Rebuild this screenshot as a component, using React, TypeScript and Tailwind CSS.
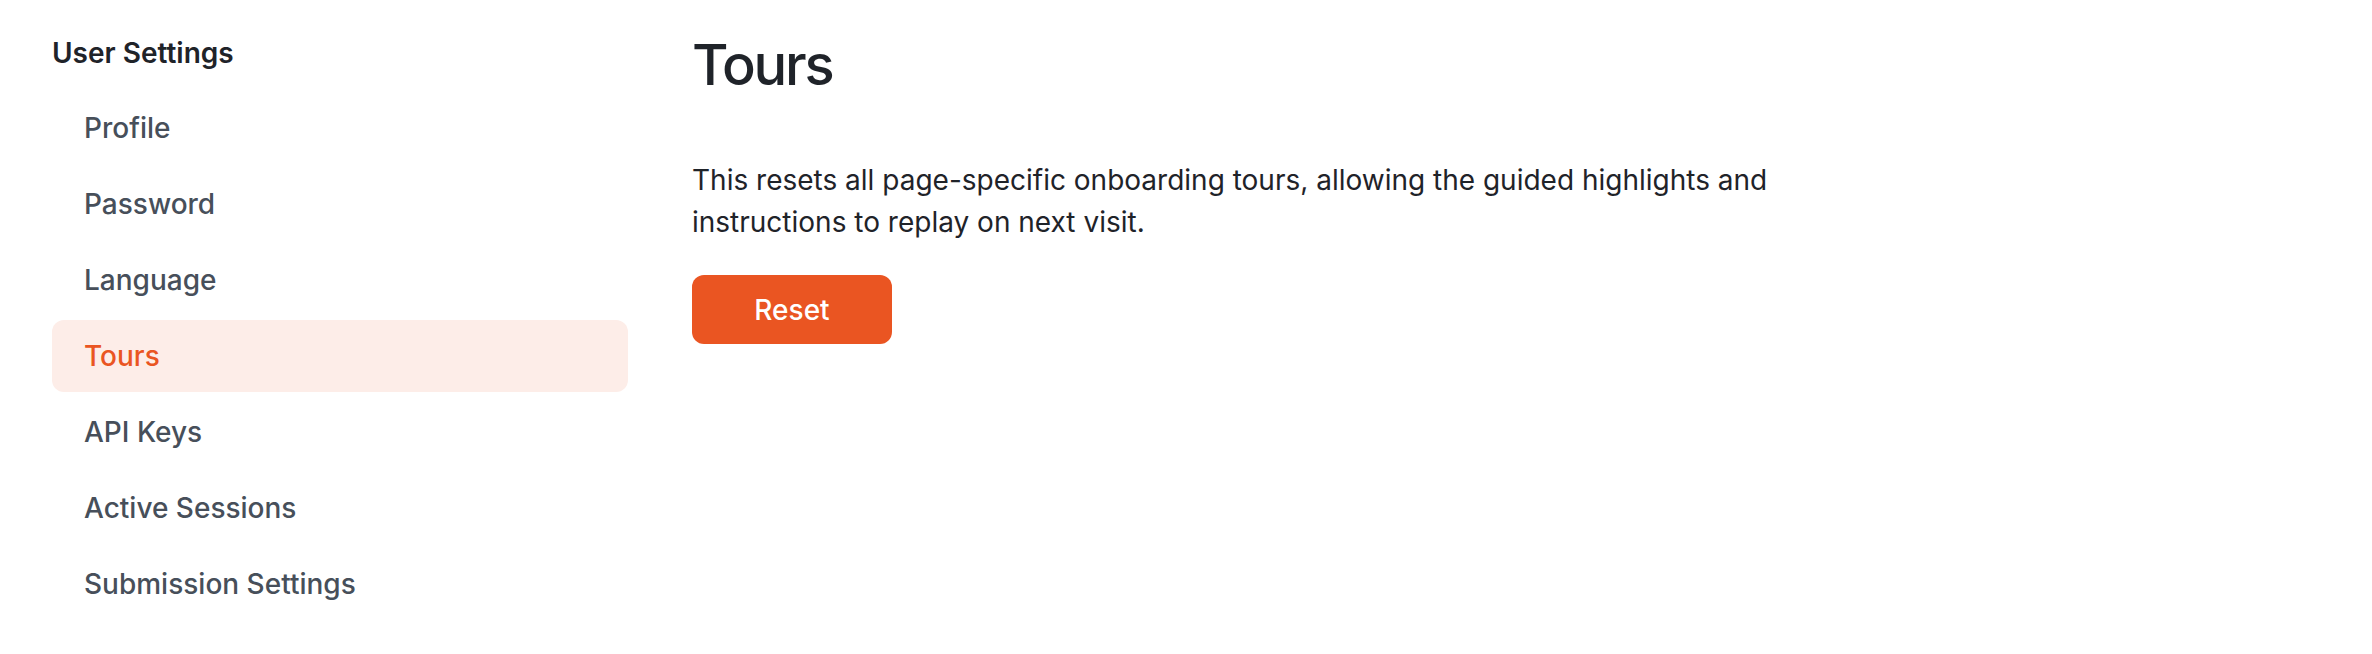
const navItems = [
  'Profile',
  'Password',
  'Language',
  'Tours',
  'API Keys',
  'Active Sessions',
  'Submission Settings',
];

const SettingsNav = ({ active }: { active: string }) => (
  <aside className="w-[576px] shrink-0">
    <h2 className="text-[28px] leading-[40px] font-semibold text-[#1f2329]">User Settings</h2>
    <nav className="mt-[19px] flex flex-col gap-[4px]">
      {navItems.map((item) => {
        const isActive = item === active;
        return (
          <a
            key={item}
            href="#"
            className={
              isActive
                ? 'rounded-[12px] bg-[#fdede8] px-8 py-4 text-[28px] leading-[40px] font-medium text-[#ea5522]'
                : 'rounded-[12px] px-8 py-4 text-[28px] leading-[40px] font-medium text-[#474f5a] hover:bg-gray-50'
            }
          >
            {item}
          </a>
        );
      })}
    </nav>
  </aside>
);

export default function App() {
  return (
    <div
      className="min-h-screen bg-white pl-[52px] pt-[33px]"
      style={{ fontFamily: 'Inter, "Noto Sans", "Liberation Sans", sans-serif' }}
    >
      <div className="flex gap-16">
        <SettingsNav active="Tours" />

        <main className="flex-1">
          <h1 className="text-[56px] leading-[64px] font-medium tracking-[-0.04em] text-[#1f2329]">Tours</h1>
          <p className="mt-[62px] max-w-[1080px] text-[28px] leading-[42px] text-[#1f2329]">
            This resets all page-specific onboarding tours, allowing the guided highlights and
            instructions to replay on next visit.
          </p>
          <button
            type="button"
            className="mt-8 flex h-[69px] w-[200px] items-center justify-center rounded-[12px] bg-[#ea5522] text-[28px] font-medium text-white"
          >
            Reset
          </button>
        </main>
      </div>
    </div>
  );
}
